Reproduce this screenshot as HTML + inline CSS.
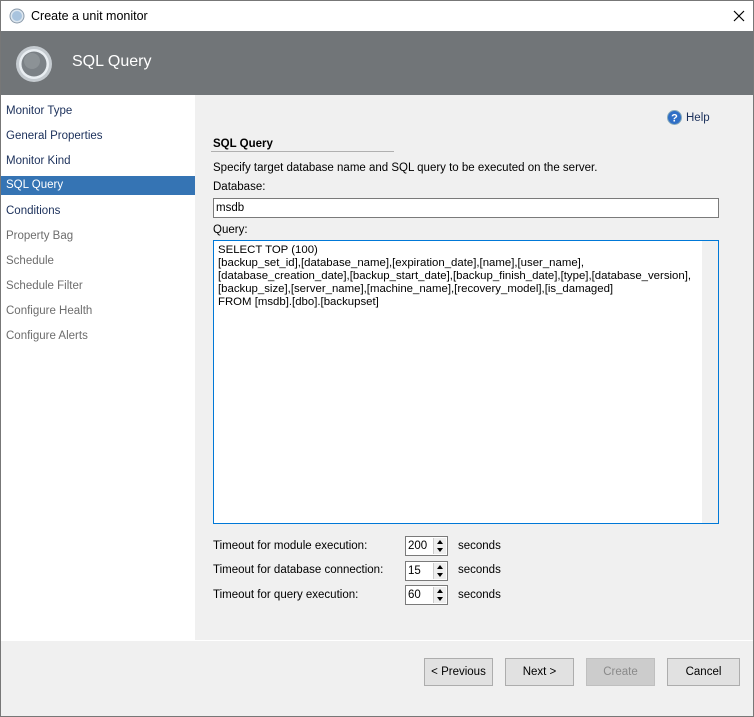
<!DOCTYPE html>
<html><head><meta charset="utf-8"><style>
*{margin:0;padding:0;box-sizing:border-box}
body{width:754px;height:717px;position:relative;font-family:"Liberation Sans",sans-serif;font-size:12px;color:#000;background:#f0f0f0;overflow:hidden}
.abs{position:absolute}
.win{position:absolute;left:0;top:0;width:754px;height:717px;border:1px solid #777}
.title{left:1px;top:1px;width:752px;height:30px;background:#fff}
.hdr{left:1px;top:31px;width:752px;height:64px;background:#717578}
.nav{left:1px;top:95px;width:194px;height:545px;background:#fff}
.nav div{position:absolute;left:0;width:194px;height:19px;line-height:19px;padding-left:5px;font-size:11.5px}
.blue{color:#1a2f5a}.gray{color:#6d6d6d}
.sel{background:#3574b4;color:#fff!important}
.lbl{font-size:11.5px}
.input{background:#fff;border:1px solid #7a7a7a}
.btn{position:absolute;top:658px;height:28px;width:69px;border:1px solid #adadad;background:#e1e1e1;text-align:center;line-height:26px;font-size:11.5px}
.spin{position:absolute;width:43px;height:20px;background:#fff;border:1px solid #7a7a7a;font-size:11.5px;line-height:18px;padding-left:2px}
.spin i{position:absolute;right:1px;top:1px;width:13px;height:16px;border-left:1px solid #ccc;background:#eee}
.spin i:before{content:"";position:absolute;left:3px;top:2px;border:3.5px solid transparent;border-bottom:4px solid #000;border-top:0}
.spin i:after{content:"";position:absolute;left:3px;top:10px;border:3.5px solid transparent;border-top:4px solid #000;border-bottom:0}
</style></head><body>
<div class="win"></div>
<div class="abs title">
 <svg class="abs" style="left:8px;top:7px" width="16" height="16"><circle cx="8" cy="8" r="7" fill="#dde7f0" stroke="#8a9aaa"/><circle cx="8" cy="8" r="5" fill="#a9c4de"/></svg>
 <div class="abs" style="left:30px;top:8px;font-size:12.5px">Create a unit monitor</div>
 <svg class="abs" style="left:732px;top:9px" width="12" height="12"><path d="M1 1L11 11M11 1L1 11" stroke="#000" stroke-width="1.2"/></svg>
</div>
<div class="abs hdr">
 <svg class="abs" style="left:13px;top:13px" width="40" height="40"><circle cx="20" cy="20" r="18" fill="#c5cbd0"/><circle cx="20" cy="20" r="15" fill="#e9eef2"/><circle cx="20" cy="20" r="12.5" fill="#7b8186"/><circle cx="18" cy="17" r="8" fill="#8c9296"/></svg>
 <div class="abs" style="left:71px;top:22px;color:#fff;font-size:16px">SQL Query</div>
</div>
<div class="abs nav">
 <div class="blue" style="top:7px">Monitor Type</div>
 <div class="blue" style="top:32px">General Properties</div>
 <div class="blue" style="top:57px">Monitor Kind</div>
 <div class="sel" style="top:81px">SQL Query</div>
 <div class="blue" style="top:107px">Conditions</div>
 <div class="gray" style="top:132px">Property Bag</div>
 <div class="gray" style="top:157px">Schedule</div>
 <div class="gray" style="top:182px">Schedule Filter</div>
 <div class="gray" style="top:207px">Configure Health</div>
 <div class="gray" style="top:232px">Configure Alerts</div>
</div>
<svg class="abs" style="left:667px;top:110px" width="15" height="15"><circle cx="7.5" cy="7.5" r="7" fill="#2f6fc6" stroke="#8ab"/><text x="7.5" y="11.5" font-size="11" font-weight="bold" fill="#fff" text-anchor="middle" font-family="Liberation Sans">?</text></svg>
<div class="abs" style="left:686px;top:112px;color:#1a2f5a;font-size:11.5px">Help</div>
<div class="abs" style="left:213px;top:138px;font-weight:bold;font-size:11.5px">SQL Query</div>
<div class="abs" style="left:211px;top:151px;width:183px;height:1px;background:#b0b0b0"></div>
<div class="abs lbl" style="left:213px;top:162px">Specify target database name and SQL query to be executed on the server.</div>
<div class="abs lbl" style="left:213px;top:181px">Database:</div>
<div class="abs input" style="left:213px;top:198px;width:506px;height:20px;padding:3px 2px;font-size:11.5px">msdb</div>
<div class="abs lbl" style="left:213px;top:224px">Query:</div>
<div class="abs" style="left:213px;top:240px;width:506px;height:284px;background:#fff;border:1px solid #0078d7">
 <div style="position:absolute;right:0;top:0;width:16px;height:282px;background:#f0f0f0"></div>
 <div style="position:absolute;left:4px;top:3px;font-size:11.4px;line-height:13px">SELECT TOP (100)<br>[backup_set_id],[database_name],[expiration_date],[name],[user_name],<br>[database_creation_date],[backup_start_date],[backup_finish_date],[type],[database_version],<br>[backup_size],[server_name],[machine_name],[recovery_model],[is_damaged]<br>FROM [msdb].[dbo].[backupset]</div>
</div>
<div class="abs lbl" style="left:213px;top:540px">Timeout for module execution:</div>
<div class="abs lbl" style="left:213px;top:564px">Timeout for database connection:</div>
<div class="abs lbl" style="left:213px;top:589px">Timeout for query execution:</div>
<div class="spin" style="left:405px;top:536px">200<i></i></div>
<div class="spin" style="left:405px;top:561px">15<i></i></div>
<div class="spin" style="left:405px;top:585px">60<i></i></div>
<div class="abs lbl" style="left:458px;top:540px">seconds</div>
<div class="abs lbl" style="left:458px;top:564px">seconds</div>
<div class="abs lbl" style="left:458px;top:589px">seconds</div>
<div class="abs" style="left:1px;top:640px;width:752px;height:1px;background:#fff"></div>
<div class="btn" style="left:424px">&lt; Previous</div>
<div class="btn" style="left:505px">Next &gt;</div>
<div class="btn" style="left:586px;background:#ccc;border-color:#bfbfbf;color:#8a8a8a">Create</div>
<div class="btn" style="left:667px;width:73px">Cancel</div>
</body></html>
